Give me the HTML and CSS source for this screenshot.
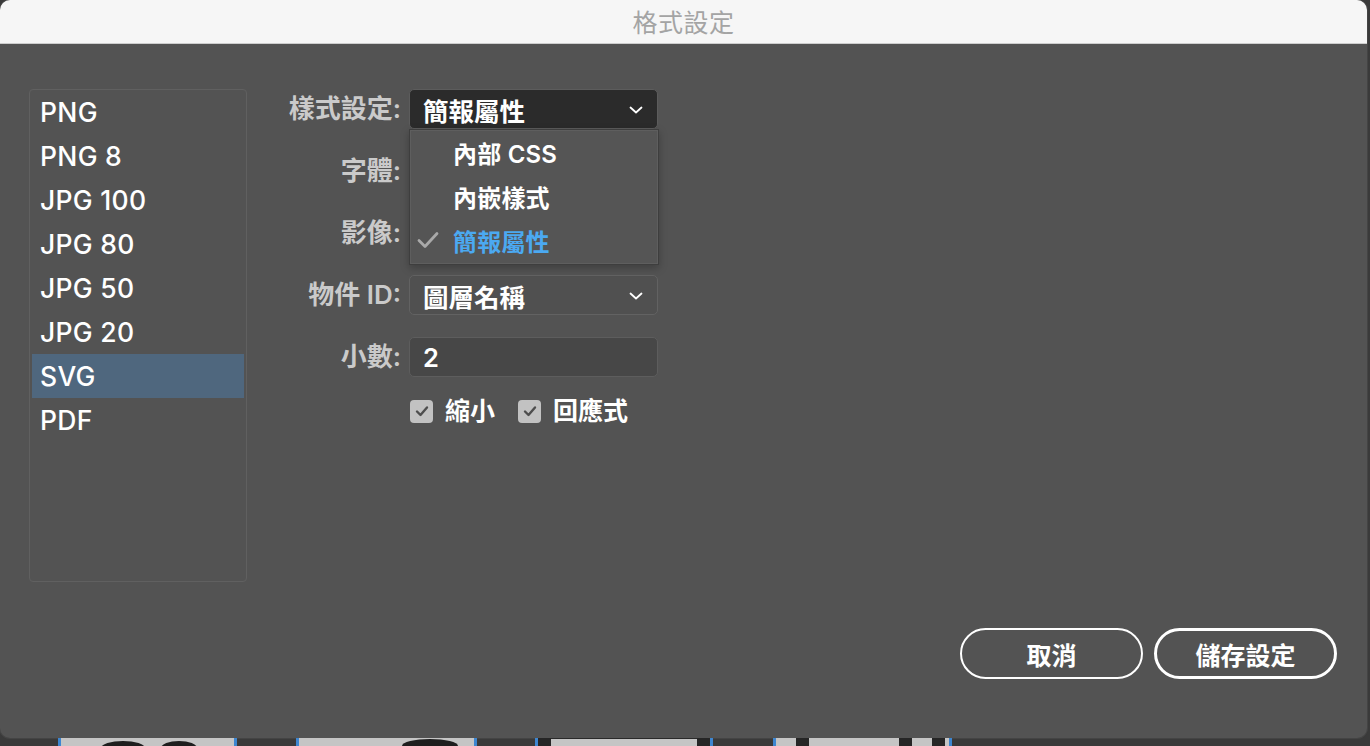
FILE: index.html
```html
<!DOCTYPE html>
<html lang="zh-Hant">
<head>
<meta charset="utf-8">
<title>格式設定</title>
<link rel="stylesheet" href="styles.css">
</head>
<body>
<div class="window">
  <div class="titlebar">格式設定</div>
  <div class="body">
    <div class="main">
      <ul class="list">
        <li class="item">PNG</li>
        <li class="item">PNG 8</li>
        <li class="item">JPG 100</li>
        <li class="item">JPG 80</li>
        <li class="item">JPG 50</li>
        <li class="item">JPG 20</li>
        <li class="item selected">SVG</li>
        <li class="item">PDF</li>
      </ul>
      <div class="form">
        <div class="label">樣式設定:</div>
        <div class="field-wrap">
          <div class="select dark">
            <span class="value">簡報屬性</span>
            <svg class="chev" width="14" height="8" viewBox="0 0 14 8"><polyline points="1.5,1.5 7,6.5 12.5,1.5" fill="none" stroke="#fff" stroke-width="1.8" stroke-linecap="round" stroke-linejoin="round"/></svg>
          </div>
          <div class="menu">
            <div class="menu-item"><span class="mark"></span><span>內部 CSS</span></div>
            <div class="menu-item"><span class="mark"></span><span>內嵌樣式</span></div>
            <div class="menu-item active"><span class="mark"><svg width="22" height="18" viewBox="0 0 22 18"><polyline points="2,9.5 8,15.5 20,2.5" fill="none" stroke="#a9a9a9" stroke-width="2.8" stroke-linecap="round" stroke-linejoin="round"/></svg></span><span>簡報屬性</span></div>
          </div>
        </div>

        <div class="label">字體:</div>
        <div class="select"></div>

        <div class="label">影像:</div>
        <div class="select"></div>

        <div class="label">物件 ID:</div>
        <div class="select">
          <span class="value">圖層名稱</span>
          <svg class="chev" width="14" height="8" viewBox="0 0 14 8"><polyline points="1.5,1.5 7,6.5 12.5,1.5" fill="none" stroke="#fff" stroke-width="1.8" stroke-linecap="round" stroke-linejoin="round"/></svg>
        </div>

        <div class="label">小數:</div>
        <div class="input"><span class="value">2</span></div>

        <div class="checks">
          <label class="check"><span class="box"><svg width="14" height="12" viewBox="0 0 14 12"><polyline points="2,6.5 5.5,10 12,2.5" fill="none" stroke="#4e4e4e" stroke-width="2.4" stroke-linecap="round" stroke-linejoin="round"/></svg></span><span class="check-text">縮小</span></label>
          <label class="check"><span class="box"><svg width="14" height="12" viewBox="0 0 14 12"><polyline points="2,6.5 5.5,10 12,2.5" fill="none" stroke="#4e4e4e" stroke-width="2.4" stroke-linecap="round" stroke-linejoin="round"/></svg></span><span class="check-text">回應式</span></label>
        </div>
      </div>
    </div>
    <div class="footer">
      <button class="btn">取消</button>
      <button class="btn primary">儲存設定</button>
    </div>
  </div>
</div>
<div class="strip">
  <div class="tile t1"><span class="blob b1"></span><span class="blob b2"></span></div>
  <div class="tile t2"><span class="blob b3"></span></div>
  <div class="tile t3"><span class="bar"></span><span class="fill"></span><span class="bar"></span></div>
  <div class="tile t4"><span class="bar"></span><span class="fill"></span><span class="bar"></span><span class="bar"></span></div>
</div>
</body>
</html>
```

FILE: styles.css
```css
* { box-sizing: border-box; }
html, body {
  margin: 0;
  padding: 0;
}
body {
  width: 1370px;
  height: 746px;
  overflow: hidden;
  background: #3a3a3a;
  font-family: Inter, "Noto Sans CJK TC", sans-serif;
}
.window {
  width: 1367px;
  height: 738px;
  border-radius: 10px;
  overflow: hidden;
  background: #535353;
  display: flex;
  flex-direction: column;
  box-shadow: 0 0 0 1px #444;
}
.titlebar {
  height: 44px;
  flex: none;
  background: #f6f6f6;
  border-bottom: 1px solid #cdcdcd;
  color: #a4a4a4;
  font-family: "Noto Sans CJK TC", sans-serif;
  font-size: 25px;
  line-height: 43px;
  text-align: center;
  letter-spacing: 0.5px;
}
.body {
  flex: 1;
  display: flex;
  flex-direction: column;
  padding: 45px 30px 59px 29px;
}
.main {
  display: flex;
  height: 493px;
}
.list {
  list-style: none;
  margin: 0;
  padding: 0 2px;
  width: 218px;
  height: 493px;
  border: 1.5px solid #606060;
  border-radius: 4px;
}
.item {
  height: 44px;
  line-height: 44px;
  padding-left: 8px;
  color: #fff;
  font-size: 26.5px;
  font-weight: 500;
  letter-spacing: 0.3px;
}
.item.selected { background: #4f677e; }

.form {
  display: grid;
  grid-template-columns: 154px 249px;
  grid-auto-rows: 40px;
  column-gap: 8px;
  row-gap: 22px;
  align-content: start;
}
.label {
  color: #cacaca;
  font-size: 26px;
  font-weight: 600;
  text-align: right;
  line-height: 40px;
  white-space: nowrap;
}
.field-wrap { position: relative; }
.select, .input {
  height: 40px;
  border: 1.5px solid #626262;
  border-radius: 5px;
  background: #505050;
  display: flex;
  align-items: center;
  justify-content: space-between;
  padding: 0 14px 0 13px;
}
.select.dark {
  background: #2b2b2b;
  border-color: #5c5c5c;
}
.input { background: #474747; border-color: #5d5d5d; }
.value {
  color: #fff;
  font-size: 25.5px;
  font-weight: 600;
  white-space: nowrap;
}
.chev { flex: none; margin-top: 1px; }

.menu {
  position: absolute;
  top: 40px;
  left: 0;
  width: 250px;
  z-index: 5;
  background: #555555;
  border: 1px solid #3e3e3e;
  box-shadow: 0 0 0 1px #5e5e5e inset, 0 3px 8px rgba(0,0,0,0.25);
  padding: 0 0 2px;
}
.menu-item {
  height: 44px;
  display: flex;
  align-items: center;
  color: #fff;
  font-size: 24px;
  font-weight: 600;
  letter-spacing: 0.2px;
}
.menu-item .mark {
  width: 43px;
  flex: none;
  display: flex;
  align-items: center;
  padding-left: 7px;
}
.menu-item.active { color: #4ba9f1; }

.checks {
  grid-column: 2;
  align-self: start;
  display: flex;
  align-items: center;
  gap: 23px;
  margin-top: -1px;
  padding-left: 1px;
}
.check {
  display: flex;
  align-items: center;
  gap: 12px;
}
.box {
  width: 23px;
  height: 23px;
  border-radius: 4px;
  background: #c2c2c2;
  display: flex;
  align-items: center;
  justify-content: center;
}
.check-text {
  color: #fff;
  font-size: 25px;
  font-weight: 600;
  line-height: 26px;
}

.footer {
  margin-top: 46px;
  display: flex;
  justify-content: flex-end;
  gap: 11px;
}
.btn {
  width: 183px;
  height: 51px;
  border-radius: 26px;
  border: 2px solid #fff;
  background: transparent;
  color: #fff;
  font-family: "Noto Sans CJK TC", sans-serif;
  font-size: 25px;
  font-weight: 700;
  padding: 0;
}
.btn.primary { border-width: 3px; }

.strip {
  height: 8px;
  display: flex;
  position: relative;
}
.tile {
  height: 8px;
  background: #c5c5c5;
  border-left: 3px solid #3d86d1;
  border-right: 3px solid #3d86d1;
  display: flex;
  position: relative;
  overflow: hidden;
}
.t1 { margin-left: 58px; width: 179px; }
.t2 { margin-left: 59px; width: 181px; }
.t3 { margin-left: 58px; width: 178px; background: #2a2a2a; }
.t4 { margin-left: 60px; width: 179px; }
.blob {
  position: absolute;
  background: #1e1e1e;
  border-radius: 50% 50% 0 0;
  top: 3px;
  height: 14px;
}
.b1 { left: 40px; width: 44px; }
.b2 { left: 100px; width: 36px; }
.b3 { left: 103px; width: 56px; top: 1px; }
.t3 .bar { width: 13px; background: #262626; }
.t3 .fill { flex: 1; background: #c5c5c5; margin-top: 1px; }
.t4 .bar { width: 13px; background: #262626; margin-left: 20px; }
.t4 .fill { width: 70px; background: #c5c5c5; }
```
